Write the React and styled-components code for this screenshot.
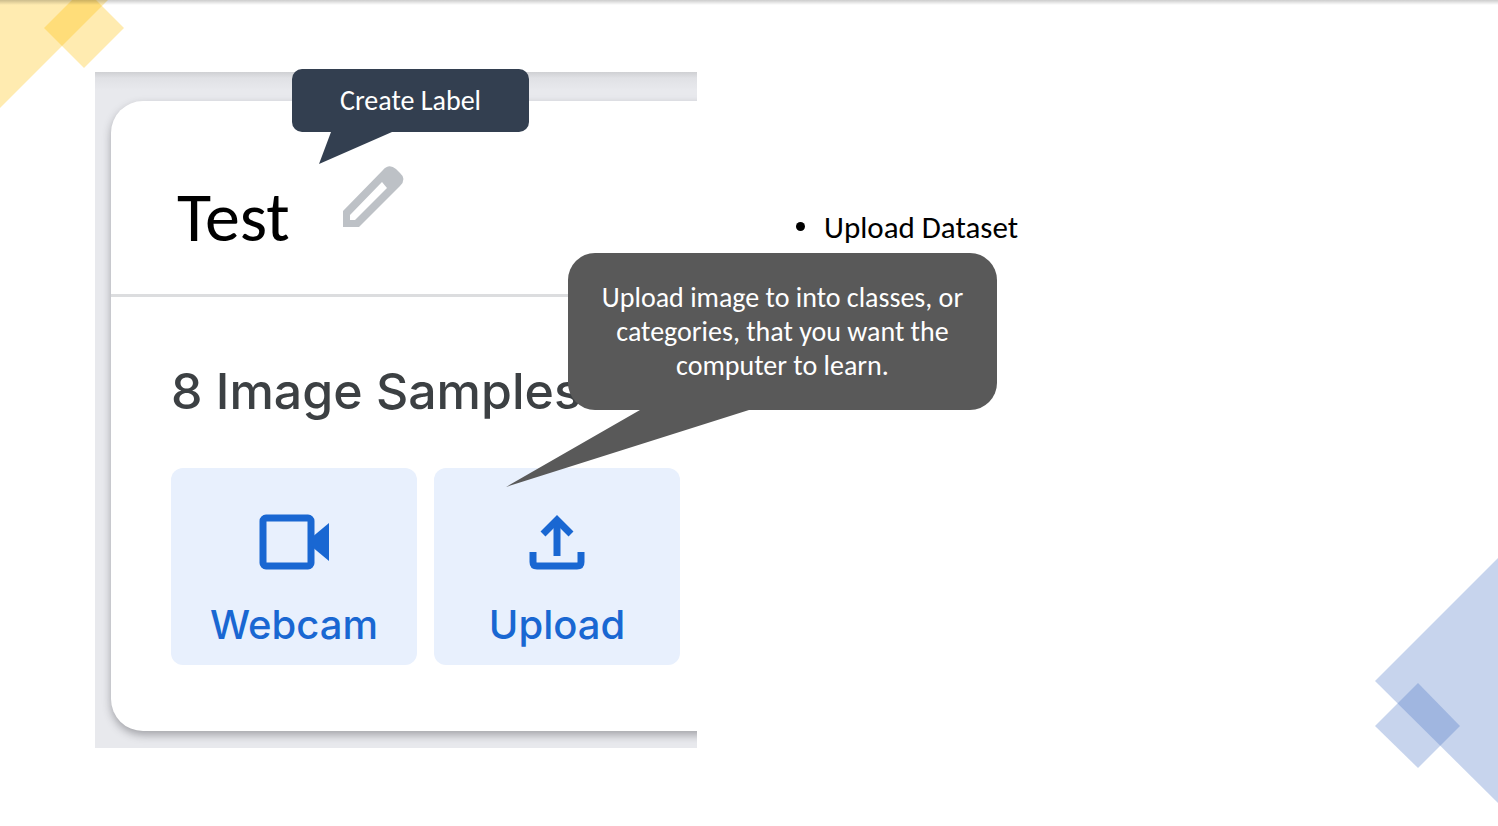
import React from "react";
import styled, { createGlobalStyle } from "styled-components";

const GlobalStyle = createGlobalStyle`
  * { box-sizing: border-box; }
  body {
    margin: 0;
    background: #fff;
    color: #000;
    font-family: Carlito, Lato, "Open Sans", sans-serif;
  }
  h1, h2, p, ul { margin: 0; padding: 0; font-weight: 400; }
`;

const Slide = styled.main`
  position: relative;
  display: flex;
  align-items: flex-start;
  min-height: 100vh;
  padding: 72px 96px 78px 95px;
  overflow: hidden;
`;

const TopShade = styled.div`
  position: absolute;
  inset: 0 0 auto;
  height: 5px;
  background: linear-gradient(rgba(0, 0, 0, 0.2), rgba(0, 0, 0, 0));
`;

const CornerArt = styled.svg`
  position: absolute;
  fill: ${(p) => p.$fill};
  ${(p) => (p.$corner === "top" ? "top: 0; left: 0;" : "right: 0; bottom: 23px;")}
`;

const Figure = styled.section`
  position: relative;
  flex: 0 1 602px;
`;

const Screen = styled.div`
  padding: 29px 0 17px 16px;
  overflow: hidden;
  background: linear-gradient(#cfd0d3, #e0e1e5 6px, #e8e9ed 18px);
`;

const Card = styled.article`
  margin-right: -32px;
  padding-right: 32px;
  border-radius: 32px 0 0 32px;
  background: #fff;
  box-shadow: 0 4px 8px rgba(60, 60, 67, 0.4);
`;

const CardHeader = styled.header`
  display: flex;
  align-items: flex-start;
  gap: 48px;
  height: 196px;
  padding: 60px 64px 0 66px;
  border-bottom: 3px solid #dcdddf;
`;

const ClassName = styled.h1`
  padding-top: 20px;
  font-size: 70px;
  line-height: 72px;
`;

const IconButton = styled.button`
  display: block;
  padding: 0;
  border: 0;
  background: none;
  cursor: pointer;
`;

const CardBody = styled.div`
  padding: 62px 17px 66px 60px;
`;

const SampleCount = styled.h2`
  color: #3c4043;
  font: 500 50px/64px Inter, sans-serif;
  white-space: nowrap;
`;

const Tiles = styled.div`
  display: grid;
  grid-template-columns: 1fr 1fr;
  gap: 17px;
  margin-top: 45px;
`;

const Tile = styled.button`
  display: flex;
  flex-direction: column;
  align-items: center;
  gap: 30px;
  height: 197px;
  padding: 46px 0 0;
  border: 0;
  border-radius: 12px;
  background: #e8f0fd;
  color: #1967d2;
  font: 500 40px/50px Inter, sans-serif;
  cursor: pointer;
`;

const Callout = styled.aside`
  position: absolute;
  display: flex;
  align-items: center;
  justify-content: center;
  color: #fff;
  font-size: 28px;
  line-height: 34px;
  text-align: center;
`;

const LabelCallout = styled(Callout)`
  top: -3px;
  left: 197px;
  width: 237px;
  height: 63px;
  border-radius: 10px;
  background: #333f50;
`;

const UploadCallout = styled(Callout)`
  top: 181px;
  left: 473px;
  width: 429px;
  height: 157px;
  border-radius: 27px;
  background: #595959;
`;

const Tail = styled.svg`
  position: absolute;
  top: 100%;
  left: ${(p) => p.$left}px;
  margin-top: -1px;
`;

const Notes = styled.ul`
  flex: 1;
  padding: 138px 0 0 127px;
  list-style: none;
  font-size: 31px;
  line-height: 34px;
`;

const Note = styled.li`
  position: relative;
  &::before {
    content: "";
    position: absolute;
    top: 12px;
    left: -28px;
    width: 9px;
    height: 9px;
    border-radius: 50%;
    background: #000;
  }
`;

export default function App() {
  return (
    <>
      <GlobalStyle />
      <Slide>
        <CornerArt $corner="top" $fill="rgba(255,192,0,0.31)" width="124" height="108" aria-hidden="true">
          <path d="M0 0H108L0 108Z" />
          <path d="M84-12L124 28L84 68L44 28Z" />
        </CornerArt>
        <CornerArt $corner="bottom" $fill="rgba(68,114,196,0.3)" width="123" height="245" aria-hidden="true">
          <path d="M123 0V245L0 123Z" />
          <path d="M43 125L85 168L43 210L0 168Z" />
        </CornerArt>
        <TopShade />

        <Figure>
          <Screen>
            <Card>
              <CardHeader>
                <ClassName>Test</ClassName>
                <IconButton aria-label="Edit class name">
                  <svg width="70" height="70" viewBox="0 0 70 70" fill="#bdc1c6" display="block">
                    <path
                      fillRule="evenodd"
                      d="M5 66V50L45 9Q51 2 58 8L62 12Q69 18 62 25L21 66ZM12 59H17L49 27L44 21L12 54Z"
                    />
                  </svg>
                </IconButton>
              </CardHeader>
              <CardBody>
                <SampleCount>8 Image Samples</SampleCount>
                <Tiles>
                  <Tile>
                    <svg width="70" height="56" viewBox="0 0 70 56">
                      <rect x="4" y="4" width="48" height="48" rx="3" fill="none" stroke="currentColor" strokeWidth="7" />
                      <path d="M52 24L70 9V47L52 32Z" fill="currentColor" />
                    </svg>
                    Webcam
                  </Tile>
                  <Tile>
                    <svg width="56" height="56" viewBox="0 0 56 56" fill="none" stroke="currentColor" strokeWidth="7">
                      <path d="M28 42V8" />
                      <path d="M14 20L28 6L42 20" />
                      <path d="M4 38V48Q4 52 8 52H48Q52 52 52 48V38" />
                    </svg>
                    Upload
                  </Tile>
                </Tiles>
              </CardBody>
            </Card>
          </Screen>

          <LabelCallout>
            Create Label
            <Tail $left={27} width="73" height="33" fill="#333f50">
              <path d="M12 0H73V1L0 33L12 1Z" />
            </Tail>
          </LabelCallout>
          <UploadCallout>
            <p>
              Upload image to into classes, or
              <br />
              categories, that you want the
              <br />
              computer to learn.
            </p>
            <Tail $left={-62} width="243" height="78" fill="#595959">
              <path d="M134 0H243V1L0 78L134 1Z" />
            </Tail>
          </UploadCallout>
        </Figure>

        <Notes>
          <Note>Upload Dataset</Note>
        </Notes>
      </Slide>
    </>
  );
}
